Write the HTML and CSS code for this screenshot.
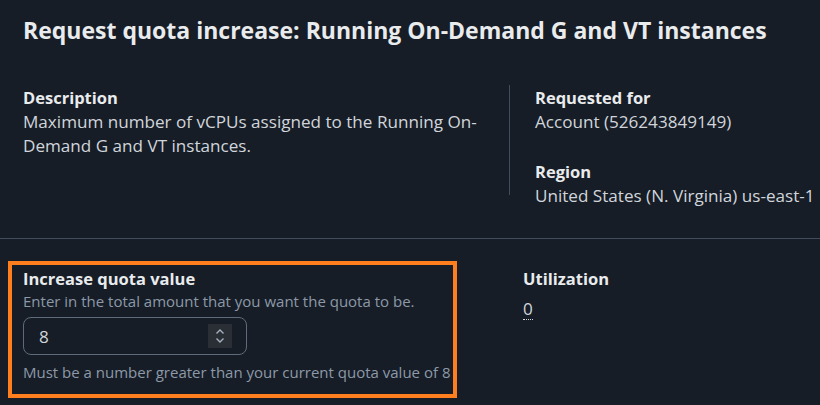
FILE: index.html
```html
<!DOCTYPE html>
<html>
<head>
<meta charset="utf-8">
<link rel="stylesheet" href="styles.css">
</head>
<body>
<div class="page">
  <h1 class="title">Request quota increase: Running On-Demand G and VT instances</h1>
  <div class="details">
    <div class="col col-left">
      <div class="label">Description</div>
      <div class="value">Maximum number of vCPUs assigned to the Running On-Demand G and VT instances.</div>
    </div>
    <div class="col col-right">
      <div class="field">
        <div class="label">Requested for</div>
        <div class="value">Account (526243849149)</div>
      </div>
      <div class="field">
        <div class="label">Region</div>
        <div class="value nowrap">United States (N. Virginia) us-east-1</div>
      </div>
    </div>
  </div>
  <div class="divider"></div>
  <div class="bottom">
    <div class="highlight">
      <div class="label">Increase quota value</div>
      <div class="hint">Enter in the total amount that you want the quota to be.</div>
      <div class="input">
        <span class="input-value">8</span>
        <span class="spinner">
          <svg width="12" height="18" viewBox="0 0 12 18"><path d="M2.5 6.5 L6 3 L9.5 6.5" fill="none" stroke="#a8b1bc" stroke-width="1.4"/><path d="M2.5 11.5 L6 15 L9.5 11.5" fill="none" stroke="#a8b1bc" stroke-width="1.4"/></svg>
        </span>
      </div>
      <div class="hint constraint">Must be a number greater than your current quota value of 8</div>
    </div>
    <div class="util">
      <div class="label">Utilization</div>
      <div class="value"><span class="dotted">0</span></div>
    </div>
  </div>
</div>
</body>
</html>
```

FILE: styles.css
```css
html, body {
  margin: 0;
  padding: 0;
  background: #161d26;
}
body {
  font-family: "Open Sans", "Noto Sans", sans-serif;
  color: #d1d5db;
  width: 820px;
  height: 405px;
  overflow: hidden;
}
.title {
  margin: 0;
  padding: 14px 0 0 23px;
  font-size: 23px;
  line-height: 32px;
  font-weight: 700;
  color: #e9ebed;
  white-space: nowrap;
}
.details {
  display: flex;
  align-items: flex-start;
  padding: 39px 0 0 23px;
}
.col-left {
  width: 487px;
  height: 110px;
  padding: 1px 24px 0 0;
  border-right: 1px solid #414d5c;
  box-sizing: border-box;
}
.col-right {
  padding: 1px 0 0 25px;
  display: flex;
  flex-direction: column;
  gap: 26px;
}
.label {
  font-size: 16.5px;
  line-height: 24px;
  font-weight: 700;
  color: #e9ebed;
}
.value {
  font-size: 17.1px;
  line-height: 24px;
  color: #d1d5db;
}
.nowrap { white-space: nowrap; }
.divider {
  height: 1px;
  background: #414d5c;
  margin-top: 30px;
}
.bottom {
  display: flex;
  align-items: flex-start;
  padding: 22px 0 0 8px;
}
.highlight {
  width: 449px;
  height: 137px;
  box-sizing: border-box;
  border: 4px solid #ff7f1f;
  padding: 2px 0 0 11px;
}
.hint {
  font-size: 15px;
  line-height: 20px;
  color: #8d99a8;
  white-space: nowrap;
}
.input {
  margin-top: 6px;
  width: 224px;
  height: 38px;
  box-sizing: border-box;
  border: 1px solid #5f6b7a;
  border-radius: 8px;
  display: flex;
  align-items: center;
  justify-content: space-between;
  padding: 0 14px 0 15px;
}
.input-value {
  font-size: 17.1px;
  color: #d1d5db;
}
.spinner {
  width: 24px;
  height: 24px;
  background: #2a2e35;
  display: flex;
  align-items: center;
  justify-content: center;
}
.constraint {
  margin-top: 7px;
}
.util {
  padding: 6px 0 0 66px;
}
.util .value { margin-top: 6px; }
.dotted {
  border-bottom: 1px dotted #d1d5db;
  line-height: 20px;
  display: inline-block;
}
```
